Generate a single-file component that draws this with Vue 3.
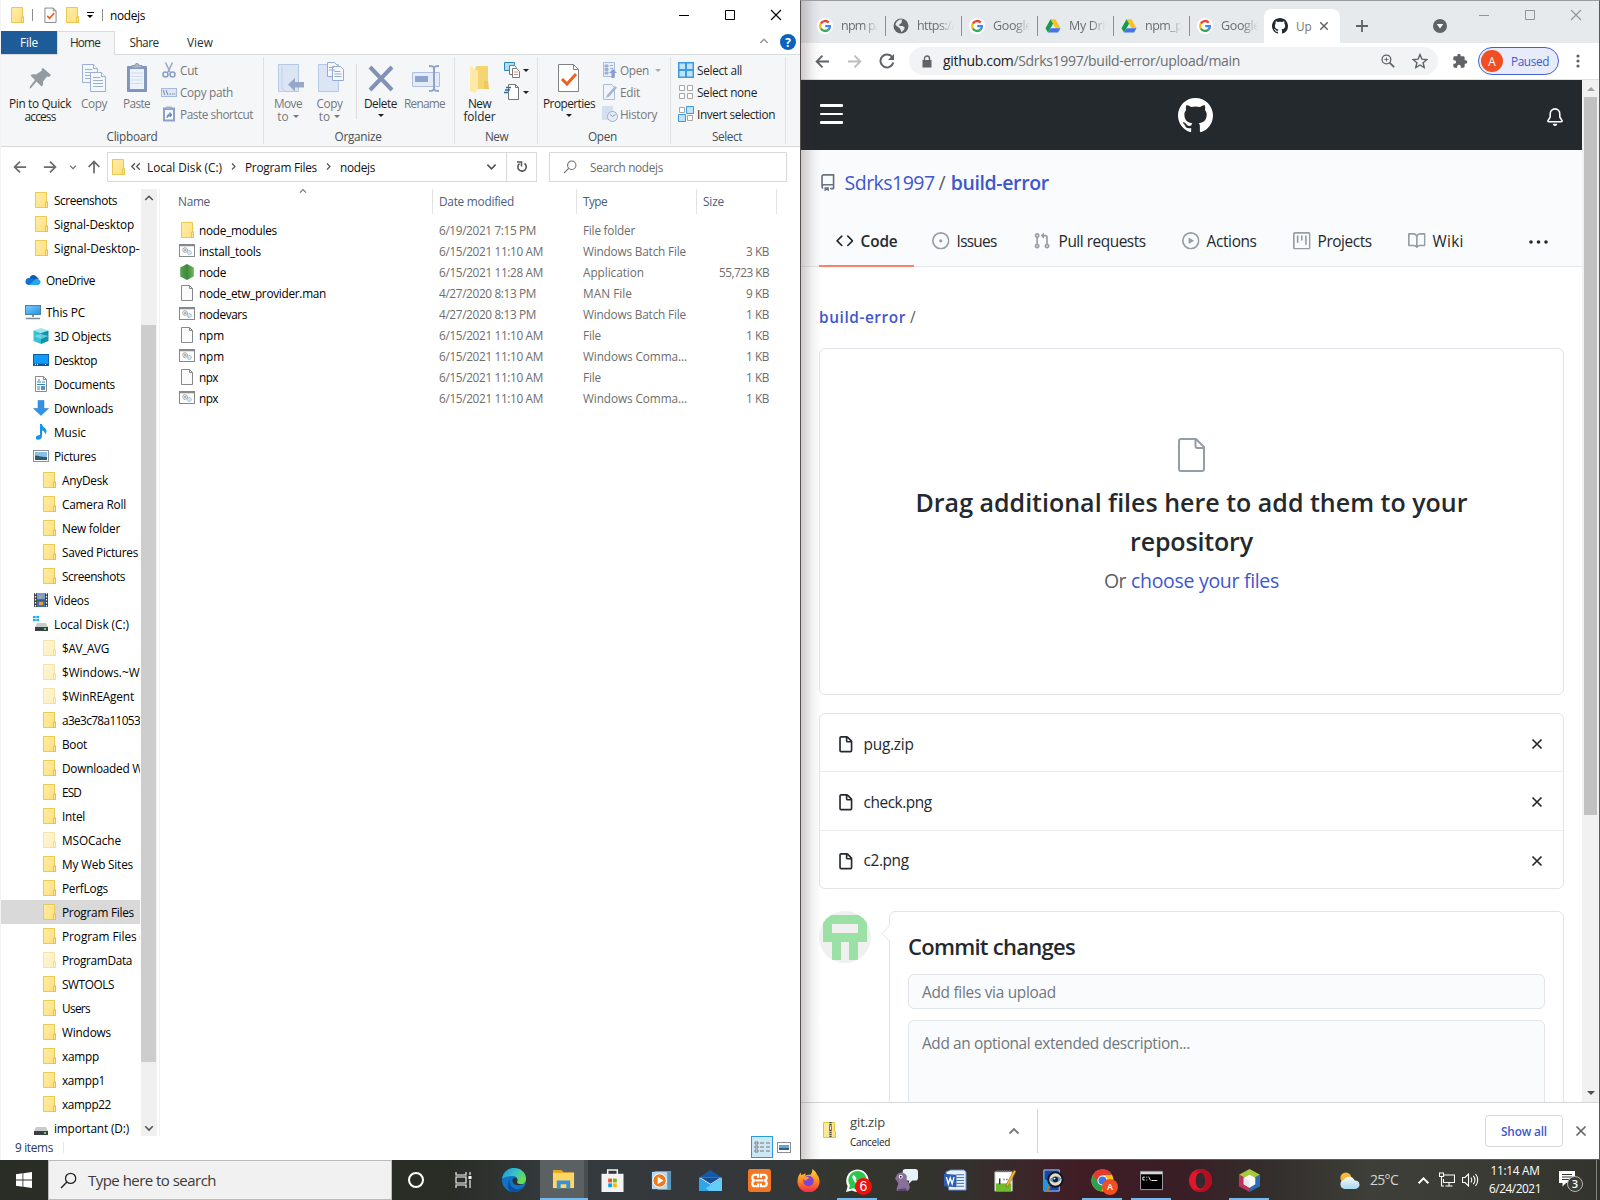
<script setup>
import { h } from 'vue'

// Draws one symbol of the sprite at the given width / height.
const Ic = (p) =>
  h('svg', { width: p.s, height: p.t || p.s, class: 'ic' }, [h('use', { href: '#' + p.n })])
Ic.props = ['n', 's', 't']

// Tracks a label so that it takes exactly the given width.
const vFit = {
  mounted(el, { value }) {
    if (!value) return
    const w = el.getBoundingClientRect().width
    const n = el.textContent.length
    el.style.letterSpacing = (value - w) / n + 'px'
  },
}

const tree = [
  ['Screenshots', 63, 1, 'folder'],
  ['Signal-Desktop', 80, 1, 'folder'],
  ['Signal-Desktop-c', 91, 1, 'folder'],
  ['OneDrive', 49, 0, 'onedrive', 'gap'],
  ['This PC', 39, 0, 'pc', 'gap'],
  ['3D Objects', 57, 1, 'cube'],
  ['Desktop', 43, 1, 'desktop'],
  ['Documents', 61, 1, 'document'],
  ['Downloads', 59, 1, 'download'],
  ['Music', 32, 1, 'music'],
  ['Pictures', 42, 1, 'picture'],
  ['AnyDesk', 46, 2, 'folder'],
  ['Camera Roll', 64, 2, 'folder'],
  ['New folder', 58, 2, 'folder'],
  ['Saved Pictures', 76, 2, 'folder'],
  ['Screenshots', 63, 2, 'folder'],
  ['Videos', 35, 1, 'video'],
  ['Local Disk (C:)', 75, 1, 'diskc'],
  ['$AV_AVG', 47, 2, 'folder', 'faint'],
  ['$Windows.~WS', 84, 2, 'folder', 'faint'],
  ['$WinREAgent', 72, 2, 'folder', 'faint'],
  ['a3e3c78a11053', 78, 2, 'folder'],
  ['Boot', 25, 2, 'folder'],
  ['Downloaded W', 81, 2, 'folder'],
  ['ESD', 19, 2, 'folder'],
  ['Intel', 23, 2, 'folder'],
  ['MSOCache', 59, 2, 'folder', 'faint'],
  ['My Web Sites', 71, 2, 'folder'],
  ['PerfLogs', 46, 2, 'folder'],
  ['Program Files', 72, 2, 'folder', 'selected'],
  ['Program Files (x86)', 104, 2, 'folder'],
  ['ProgramData', 70, 2, 'folder', 'faint'],
  ['SWTOOLS', 52, 2, 'folder'],
  ['Users', 28, 2, 'folder'],
  ['Windows', 49, 2, 'folder'],
  ['xampp', 37, 2, 'folder'],
  ['xampp1', 43, 2, 'folder'],
  ['xampp22', 49, 2, 'folder'],
  ['important (D:)', 75, 1, 'disk'],
]

const files = [
  ['folder', 'node_modules', 78, '6/19/2021 7:15 PM', 97, 'File folder', 52, '', 0],
  ['batch', 'install_tools', 62, '6/15/2021 11:10 AM', 104, 'Windows Batch File', 103, '3 KB', 23],
  ['node', 'node', 27, '6/15/2021 11:28 AM', 104, 'Application', 61, '55,723 KB', 50],
  ['blank', 'node_etw_provider.man', 127, '4/27/2020 8:13 PM', 97, 'MAN File', 49, '9 KB', 23],
  ['batch', 'nodevars', 48, '4/27/2020 8:13 PM', 97, 'Windows Batch File', 103, '1 KB', 23],
  ['blank', 'npm', 25, '6/15/2021 11:10 AM', 104, 'File', 18, '1 KB', 23],
  ['batch', 'npm', 25, '6/15/2021 11:10 AM', 104, 'Windows Comma...', 104, '1 KB', 23],
  ['blank', 'npx', 19, '6/15/2021 11:10 AM', 104, 'File', 18, '1 KB', 23],
  ['batch', 'npx', 19, '6/15/2021 11:10 AM', 104, 'Windows Comma...', 104, '1 KB', 23],
]

const tabs = [
  ['google', 'npm pa', 40],
  ['globe', 'https://', 38],
  ['google', 'Google', 39],
  ['drive', 'My Driv', 42],
  ['drive', 'npm_pr', 42],
  ['google', 'Google', 39],
]

const nav = [
  ['o-code', 'Code', 37, 'on', 95],
  ['o-issue', 'Issues', 40, '', 103],
  ['o-pr', 'Pull requests', 87, '', 148],
  ['o-play', 'Actions', 50, '', 110],
  ['o-project', 'Projects', 54, '', 116],
  ['o-book', 'Wiki', 31, '', 95],
]

const uploads = [['pug.zip', 50], ['check.png', 68], ['c2.png', 45]]

const apps = [
  ['explorer', 'active'],
  ['store', ''],
  ['player', ''],
  ['mail', ''],
  ['xampp', ''],
  ['firefox', ''],
  ['whatsapp', 'open'],
  ['pidgin', ''],
  ['word', ''],
  ['npp', ''],
  ['viewer', ''],
  ['chrome', 'open'],
  ['cmd', 'open multi'],
  ['opera', ''],
  ['netbeans', 'open'],
]
</script>

<template>
  <div class="screen">
    <svg class="sprite" width="0" height="0">
      <defs>
        <linearGradient id="gf" x1="0" y1="0" x2="1" y2="1"><stop offset="0" stop-color="#ffeca5" /><stop offset="1" stop-color="#ffe07f" /></linearGradient>
        <linearGradient id="gb" x1="0" y1="0" x2="1" y2="1"><stop offset="0" stop-color="#7fccff" /><stop offset="1" stop-color="#1d93e6" /></linearGradient>
        <linearGradient id="gn" x1="0" y1="0" x2="1" y2="0"><stop offset="0" stop-color="#56a64b" /><stop offset=".5" stop-color="#3f873f" /><stop offset="1" stop-color="#6cb85c" /></linearGradient>
        <linearGradient id="ge" x1="0" y1="0" x2="1" y2=".6"><stop offset="0" stop-color="#1b8fe0" /><stop offset=".5" stop-color="#35c1c9" /><stop offset="1" stop-color="#6fdc4b" /></linearGradient>
        <linearGradient id="gx" x1="0" y1="0" x2="0" y2="1"><stop offset="0" stop-color="#ffd83a" /><stop offset=".5" stop-color="#ff8a1f" /><stop offset="1" stop-color="#f5254f" /></linearGradient>
        <linearGradient id="gp" x1="0" y1="0" x2="0" y2="1"><stop offset="0" stop-color="#f7fafc" /><stop offset="1" stop-color="#a9d8ee" /></linearGradient>
      </defs>
      <symbol id="folder" viewBox="0 0 16 16"><path d="M2.500.5h11v9l1 0v6h-12z" fill="url(#gf)" stroke="#ebc850" /><path d="M12.500 15V10h2v5.500h-2z" fill="#ffe793" stroke="#e3bb42" stroke-width=".8" /></symbol>
      <symbol id="zip" viewBox="0 0 16 16"><path d="M1.500.5h11v9h1v6h-12z" fill="url(#gf)" stroke="#dfc43f" /><path d="M7 0h3v16H7z" fill="#b9bcc0" /><path d="M8.500 0v4M8.500 8v8" stroke="#444" stroke-width="2" stroke-dasharray="1 1" /><rect x="7.500" y="4" width="2" height="4" fill="#eee" stroke="#555" stroke-width=".7" /></symbol>
      <symbol id="onedrive" viewBox="0 0 16 16"><path d="M4.500 6a4 4 0 0 1 7.200-1.200L14 7 6 11z" fill="#0f5cb4" /><path d="M3.500 13A3.300 3.300 0 1 1 4.600 6L10 8l-1 5z" fill="#1073d0" /><path d="M4 13l6-5.600A3.600 3.600 0 0 1 14 7.600 2.900 2.900 0 0 1 13.300 13z" fill="#28a8ea" /></symbol>
      <symbol id="pc" viewBox="0 0 16 16"><rect x=".5" y="1.500" width="15" height="9" fill="url(#gb)" stroke="#4d7f9f" /><path d="M7 11h2v2H7z" fill="#8a949b" /><path d="M1 14.500h14" stroke="#7e8a92" stroke-width="1.500" /></symbol>
      <symbol id="cube" viewBox="0 0 16 16"><path d="M8 0l7.500 2.500L8 5 .5 2.500z" fill="#9fe6f0" /><path d="M.5 2.500L8 5v11L.5 13z" fill="#37c1d6" /><path d="M15.500 2.500L8 5v11l7.500-3z" fill="#1193ac" /><path d="M1 8l7-2 7.500 2L8 11z" fill="#83dfec" opacity=".7" /></symbol>
      <symbol id="desktop" viewBox="0 0 16 16"><rect x=".5" y="2.500" width="15" height="11" fill="#129bf5" stroke="#0a63b0" /><path d="M1 12.500h14" stroke="#084f92" stroke-width="1.500" /><path d="M2 12.500h3M12 12.500h2" stroke="#fff" stroke-dasharray="1 1" /></symbol>
      <symbol id="document" viewBox="0 0 16 16"><path d="M2.500.5h8l3 3v12h-11z" fill="#fff" stroke="#868a8e" /><path d="M10.500.5v3h3" fill="none" stroke="#868a8e" /><path d="M5 4h2M4 6h4M9 6h3M4 8.500h8M4 11h3M4 13h3" stroke="#2f86c9" /><path d="M8 10h4v4H8z" fill="#5c92b8" /></symbol>
      <symbol id="download" viewBox="0 0 16 16"><path d="M5 .5h6v8h4.500L8 15.500.5 8.500H5z" fill="#3392e3" stroke="#2179c4" stroke-width=".5" /></symbol>
      <symbol id="music" viewBox="0 0 16 16"><path d="M7 0h2c0 3 4.500 4 4.500 7 0 1.500-1 3-1.500 3.500.5-2-1-3.500-3-4V12c0 2-1.500 3.800-4 3.800C1.500 15.800 2 11 7 11z" fill="#1495ee" /></symbol>
      <symbol id="picture" viewBox="0 0 16 16"><rect x=".5" y="2.500" width="15" height="11" fill="#fff" stroke="#8b9196" /><path d="M2 4h12v8H2z" fill="#8bbfe8" /><path d="M2 7.500c4 0 6 2 12 1.500V12H2z" fill="#2f5a6a" /></symbol>
      <symbol id="video" viewBox="0 0 16 16"><path d="M1 1h14v14H1z" fill="#3a3d42" /><path d="M4 1h8v6.500H4z" fill="#6f9ed8" /><path d="M4 8.500h8V15H4z" fill="#3d6fc0" /><path d="M6 3l4 2-4 2zM6 10h4v3H6z" fill="#d7a43c" /><path d="M2.500 1v14M13.500 1v14" stroke="#fff" stroke-width="1.300" stroke-dasharray="1.500 1.500" /></symbol>
      <symbol id="disk" viewBox="0 0 16 16"><path d="M3 7h10l2 4H1z" fill="#c9ccce" /><path d="M1 11h14v4H1z" fill="#3c3f42" /><rect x="11" y="12" width="2" height="2" fill="#4ee04e" /></symbol>
      <symbol id="diskc" viewBox="0 0 16 16"><path d="M0 0h2.700v2.300H0zM3.300 0H6v2.300H3.300zM0 3h2.700v2.300H0zM3.300 3H6v2.300H3.300z" fill="#17b3f0" /><path d="M4 7h9l2 4H2z" fill="#c9ccce" /><path d="M2 11h13v4H2z" fill="#3c3f42" /><rect x="11" y="12" width="2" height="2" fill="#4ee04e" /></symbol>
      <symbol id="batch" viewBox="0 0 16 16"><rect x=".5" y="1.500" width="15" height="12" fill="#fff" stroke="#85898c" /><path d="M1 2.500h14" stroke="#85898c" stroke-width="1.500" /><circle cx="6" cy="7" r="2.400" fill="#e3e5e7" stroke="#85898c" stroke-dasharray="1 .6" /><circle cx="6" cy="7" r=".8" fill="#777" /><circle cx="10.300" cy="9.500" r="2" fill="#d3e8f7" stroke="#7ea5c2" stroke-dasharray="1 .6" /></symbol>
      <symbol id="blank" viewBox="0 0 16 16"><path d="M2.500.5h8l3 3v12h-11z" fill="#fbfbfb" stroke="#85898c" /><path d="M10.500.5v3h3" fill="none" stroke="#85898c" /></symbol>
      <symbol id="node" viewBox="0 0 16 16"><path d="M8 0l6.800 3.500v9L8 16l-6.800-3.500v-9z" fill="url(#gn)" /></symbol>
      <symbol id="check" viewBox="0 0 14 17"><path d="M1 .5h9l3 3V16H1z" fill="#fff" stroke="#7d8185" /><path d="M10 .5v3h3" fill="none" stroke="#7d8185" /><path d="M3.500 9l2.500 2.500 5-5.500" fill="none" stroke="#ee5e1d" stroke-width="1.800" /></symbol>
      <symbol id="pin" viewBox="0 0 32 32"><path d="M18 6l8 7-2 2-2-.5-4 5c.5 2.500 0 4-1.500 5l-5-5L6 26l-1.500.500.5-2 5-6.500-4.500-4.500c1.500-1.500 3.500-1.500 5.500-1l6-4-.5-1.500z" fill="#929ba1" transform="translate(1 0)" /></symbol>
      <symbol id="copy" viewBox="0 0 32 32"><g fill="#f4f7fc" stroke="#9db0d2"><path d="M4.500 2.500h11l4 4v14h-15z" /><path d="M15.500 2.500v4h4M7 7.500h7M7 10.500h10M7 13.500h10M7 16.500h10" /><path d="M12.500 10.500h11l4 4v15h-15z" /><path d="M23.500 10.500v4h4M15 15.500h7M15 18.500h10M15 21.500h10M15 24.500h10" /></g></symbol>
      <symbol id="paste" viewBox="0 0 32 32"><path d="M6.500 4.500h19v25h-19z" fill="#8297bf" stroke="#8092b5" /><path d="M9 7h14v20H9z" fill="#eef2fa" /><path d="M11 6V3.500h3a2 2 0 0 1 4 0h3V6z" fill="#a9b6cc" stroke="#8898b8" /><path d="M10 11h12M10 14.500h12M10 18h12M10 21.500h12" stroke="#d0dbee" /></symbol>
      <symbol id="cut" viewBox="0 0 16 16"><path d="M4.500.5L9 10M11.500.5L7 10" stroke="#9aabc6" stroke-width="1.600" /><circle cx="4.500" cy="12.500" r="2.500" fill="none" stroke="#8ba0c6" stroke-width="1.600" /><circle cx="11.500" cy="12.500" r="2.500" fill="none" stroke="#8ba0c6" stroke-width="1.600" /></symbol>
      <symbol id="path" viewBox="0 0 16 16"><rect x=".5" y="4.500" width="15" height="8" fill="#dfe7f4" stroke="#a7b9d8" /><path d="M2 6l2 5M5 6l2 5M8.500 10h1.500M11 10h1.500M13.300 10h1" stroke="#6d84ae" /></symbol>
      <symbol id="shortcut" viewBox="0 0 16 16"><rect x="2" y="1.500" width="12" height="14" fill="#8da1c7" /><rect x="4" y="4" width="8" height="9.500" fill="#f4f7fc" /><path d="M5 .5h6V3H5z" fill="#a0aec8" /><path d="M6 12c0-3 1-4 3-4V6.500L11 9 9 11V9.500" fill="#7189b8" stroke="#7189b8" stroke-width=".8" /></symbol>
      <symbol id="moveto" viewBox="0 0 32 32"><path d="M6.500 2.500h20v27h-20z" fill="#dbe5f4" stroke="#b7c8e3" /><path d="M7 29.500h7l-4-3V5" fill="none" stroke="#c1d0e8" /><path d="M16 22.500l7-6.500v4h9v5.500h-9v4z" fill="#98a7c6" /></symbol>
      <symbol id="copyto" viewBox="0 0 32 32"><path d="M4.500 2.500h20v27h-20z" fill="#dbe5f4" stroke="#b7c8e3" /><g fill="#f6f8fc" stroke="#98abcf"><path d="M13.500.5h7l3 3v11h-10z" /><path d="M15 5.500h5M15 8h6M18.500 4.500h8l3 3v11h-11z" /><path d="M20.500 9.500h6M20.500 12h7M20.500 14.500h7" /></g></symbol>
      <symbol id="delete" viewBox="0 0 32 32"><path d="M5 5l22 23M27 5L5 28" stroke="#8292b6" stroke-width="4" /></symbol>
      <symbol id="rename" viewBox="0 0 32 32"><path d="M3.500 10.500h27v14h-27z" fill="#e4ecf7" stroke="#afc1df" /><path d="M6 14h13v6H6z" fill="#8fa4cb" /><path d="M20 4c3 0 5 0 5 3v19c0 3 2 3 5 3M30 4c-3 0-5 0-5 3v19c0 3-2 3-5 3" fill="none" stroke="#8ea3ca" stroke-width="2" /></symbol>
      <symbol id="newfolder" viewBox="0 0 32 32"><path d="M12 4h12v23H6z" fill="#f5d472" /><path d="M6 4l8 5v16l-3 6-5-2z" fill="#ffe9a6" /><path d="M20 27V19h4l1 8z" fill="#f0c95b" /></symbol>
      <symbol id="newitem" viewBox="0 0 16 16"><path d="M.5.500h10v8H.5z" fill="#b6dcf3" stroke="#2d89bd" /><path d="M5.500 3.500h5l2 2v7h-7z" fill="#fff" stroke="#777" /><path d="M8.500 6.500h4l3 3v6h-7z" fill="#fff" stroke="#777" /><path d="M10 10h4M10 12.500h4" stroke="#d88" /></symbol>
      <symbol id="easy" viewBox="0 0 16 16"><path d="M4.500.500h7l3 3v12h-10z" fill="#fff" stroke="#777" /><path d="M11.500.500v3h3" fill="none" stroke="#777" /><path d="M2 3.500h5M1 6h5M0 8.500h4" stroke="#2a6ea8" stroke-width="1.300" /></symbol>
      <symbol id="props" viewBox="0 0 32 32"><path d="M5.500 2.500h15l5 5v22h-20z" fill="#fff" stroke="#7f8386" /><path d="M20.500 2.500v5h5" fill="none" stroke="#7f8386" /><path d="M9 17l5 5 9-10" fill="none" stroke="#ef6020" stroke-width="3" /></symbol>
      <symbol id="open" viewBox="0 0 16 16"><path d="M1.500.500h11v14h-11z" fill="#e7eef8" stroke="#a9bbdb" /><path d="M3 3h3v2H3zM3 6.500h3v2H3zM3 10h3v2H3zM8 3.500h3M8 6.500h3" stroke="#9db0d3" fill="#9db0d3" /><path d="M11 7l4 4h-2.500v5h-3v-5H7z" fill="#8a9fc6" /></symbol>
      <symbol id="edit" viewBox="0 0 16 16"><path d="M1.500.500h8l3 3v12h-11z" fill="#f1f5fb" stroke="#a9bbdb" /><path d="M4 14l1-3 8-9 2 1.700-8 9z" fill="#a5b6d6" /></symbol>
      <symbol id="history" viewBox="0 0 16 16"><path d="M0 0h11v14H0z" fill="#d4dff0" /><circle cx="10.500" cy="10.500" r="5" fill="#e8eef7" stroke="#9badce" /><path d="M10.500 10.500l3-2M10.500 10.500L8 8.500" stroke="#8398c0" /></symbol>
      <symbol id="selall" viewBox="0 0 16 16"><path d="M0 0h16v16H0z" fill="#3d9ade" /><path d="M1.500 1.500H7V7H1.500zM9 1.500h5.500V7H9zM1.500 9H7v5.500H1.500zM9 9h5.500v5.500H9z" fill="#bfe3fb" /></symbol>
      <symbol id="selnone" viewBox="0 0 16 16"><path d="M1.500 1.500h5v5h-5zM9.500 1.500h5v5h-5zM1.500 9.500h5v5h-5zM9.500 9.500h5v5h-5z" fill="#fff" stroke="#a6a6a6" /></symbol>
      <symbol id="selinv" viewBox="0 0 16 16"><path d="M1.500 1.500h5v5h-5zM9.500 9.500h5v5h-5z" fill="#fff" stroke="#a6a6a6" /><path d="M8.500.500h7v7h-7zM.5 8.500h7v7h-7z" fill="#bfe3fb" stroke="#3d9ade" /></symbol>
      <symbol id="google" viewBox="0 0 16 16"><circle cx="8" cy="8" r="8" fill="#fff" /><g fill="none" stroke-width="2.300"><path d="M11.700 4.600A4.900 4.900 0 0 0 3.800 5.600" stroke="#ea4335" /><path d="M3.800 5.600a4.900 4.900 0 0 0 0 4.900" stroke="#fbbc05" /><path d="M3.800 10.500a4.900 4.900 0 0 0 7.600 1.200" stroke="#34a853" /><path d="M11.400 11.700A4.900 4.900 0 0 0 12.900 8.200H8.200" stroke="#4285f4" /></g></symbol>
      <symbol id="globe" viewBox="0 0 16 16"><circle cx="8" cy="8" r="7.500" fill="#5f6368" /><path d="M9.500 1.500c-2 2 .5 2-1.500 4-2 .5-2.500 2-1 2.500h2.500c1 1 2.500 1 2 2.500-.5 1.500-2 3-3.500 3.500.5-2-1-2.500-1.500-4L2.500 7c0-2.500 2-4.500 4.500-5.500z" fill="#e7eaed" /></symbol>
      <symbol id="drive" viewBox="0 0 16 16"><path d="M5.500 1.300h5l5 9h-5z" fill="#fcc31e" /><path d="M5.500 1.300l2.600 4.400L3 14.600.5 10.300z" fill="#169c4d" /><path d="M3 14.600l2.600-4.300h9.900L13 14.600z" fill="#4474e8" /></symbol>
      <symbol id="puzzle" viewBox="0 0 24 24"><path fill="#5f6368" d="M20.500 11H19V7a2 2 0 0 0-2-2h-4V3.500a2.500 2.500 0 0 0-5 0V5H4a2 2 0 0 0-2 2v3.800h1.500a2.700 2.700 0 0 1 0 5.400H2V20a2 2 0 0 0 2 2h3.800v-1.500a2.700 2.700 0 0 1 5.400 0V22H17a2 2 0 0 0 2-2v-4h1.500a2.500 2.500 0 0 0 0-5z" /></symbol>
      <symbol id="mark" viewBox="0 0 16 16"><path fill="currentColor" d="M8 0C3.580 0 0 3.580 0 8c0 3.540 2.290 6.530 5.470 7.590.4.070.55-.17.55-.38 0-.19-.01-.82-.01-1.490-2.010.37-2.530-.49-2.690-.94-.09-.23-.48-.94-.82-1.130-.28-.15-.68-.52-.01-.53.63-.01 1.080.58 1.230.82.72 1.210 1.870.87 2.330.66.070-.52.28-.87.51-1.070-1.780-.2-3.640-.89-3.640-3.950 0-.87.31-1.590.82-2.150-.08-.2-.36-1.020.08-2.120 0 0 .67-.21 2.200.82.64-.18 1.320-.27 2-.27.68 0 1.360.09 2 .27 1.530-1.040 2.200-.82 2.200-.82.44 1.100.16 1.920.08 2.120.51.56.82 1.270.82 2.150 0 3.070-1.870 3.750-3.650 3.950.29.25.54.73.54 1.480 0 1.070-.01 1.930-.01 2.200 0 .21.15.46.55.38A8.013 8.013 0 0016 8c0-4.420-3.580-8-8-8z" /></symbol>
      <symbol id="o-repo" viewBox="0 0 16 16"><path fill="currentColor" fill-rule="evenodd" d="M2 2.500A2.500 2.500 0 014.500 0h8.750a.75.75 0 01.75.75v12.500a.75.75 0 01-.75.75h-2.500a.75.75 0 110-1.500h1.750v-2h-8a1 1 0 00-.714 1.700.75.75 0 01-1.072 1.050A2.495 2.495 0 012 11.500v-9zm10.500-1V9h-8c-.356 0-.694.074-1 .208V2.500a1 1 0 011-1h8zM5 12.250v3.250a.25.25 0 00.4.2l1.450-1.087a.25.25 0 01.3 0L8.600 15.700a.25.25 0 00.4-.2v-3.250a.25.25 0 00-.25-.25h-3.500a.25.25 0 00-.25.25z" /></symbol>
      <symbol id="o-issue" viewBox="0 0 16 16"><path fill="currentColor" fill-rule="evenodd" d="M8 9.500a1.500 1.500 0 100-3 1.500 1.500 0 000 3zM8 0a8 8 0 100 16A8 8 0 008 0zM1.500 8a6.500 6.500 0 1113 0 6.500 6.500 0 01-13 0z" /></symbol>
      <symbol id="o-pr" viewBox="0 0 16 16"><path fill="currentColor" fill-rule="evenodd" d="M7.177 3.073L9.573.677A.25.25 0 0110 .854v4.792a.25.25 0 01-.427.177L7.177 3.427a.25.25 0 010-.354zM3.750 2.500a.75.75 0 100 1.500.75.75 0 000-1.500zm-2.250.75a2.250 2.250 0 113 2.122v5.256a2.251 2.251 0 11-1.500 0V5.372A2.250 2.250 0 011.500 3.250zM11 2.500h-1V4h1a1 1 0 011 1v5.628a2.251 2.251 0 101.500 0V5A2.500 2.500 0 0011 2.500zm1 10.250a.75.75 0 111.500 0 .75.75 0 01-1.500 0zM3.750 12a.75.75 0 100 1.500.75.75 0 000-1.500z" /></symbol>
      <symbol id="o-play" viewBox="0 0 16 16"><path fill="currentColor" fill-rule="evenodd" d="M1.500 8a6.500 6.500 0 1113 0 6.500 6.500 0 01-13 0zM8 0a8 8 0 100 16A8 8 0 008 0zM6.379 5.227A.25.25 0 006 5.442v5.117a.25.25 0 00.379.214l4.264-2.559a.25.25 0 000-.428L6.379 5.227z" /></symbol>
      <symbol id="o-project" viewBox="0 0 16 16"><path fill="currentColor" fill-rule="evenodd" d="M1.750 0A1.750 1.750 0 000 1.750v12.500C0 15.216.784 16 1.750 16h12.500A1.750 1.750 0 0016 14.250V1.750A1.750 1.750 0 0014.250 0H1.750zM1.500 1.750a.25.25 0 01.25-.25h12.500a.25.25 0 01.25.25v12.500a.25.25 0 01-.25.25H1.750a.25.25 0 01-.25-.25V1.750zM11.750 3a.75.75 0 00-.75.75v7.500a.75.75 0 001.500 0v-7.500a.75.75 0 00-.75-.75zm-8.250.75a.75.75 0 011.500 0v5.500a.75.75 0 01-1.500 0v-5.500zM8 3a.75.75 0 00-.75.75v3.500a.75.75 0 001.500 0v-3.500A.75.75 0 008 3z" /></symbol>
      <symbol id="o-book" viewBox="0 0 16 16"><path fill="currentColor" fill-rule="evenodd" d="M0 1.750A.75.75 0 01.75 1h4.253c1.227 0 2.317.59 3 1.501A3.744 3.744 0 0111.006 1h4.245a.75.75 0 01.75.75v10.500a.75.75 0 01-.75.75h-4.507a2.250 2.250 0 00-1.591.659l-.622.621a.75.75 0 01-1.060 0l-.622-.621A2.250 2.250 0 005.258 13H.75a.75.75 0 01-.75-.75V1.750zm8.755 3a2.250 2.250 0 012.250-2.250H14.500v9h-3.757c-.71 0-1.400.201-1.992.572l.004-7.322zm-1.504 7.324l.004-5.073-.002-2.253A2.250 2.250 0 005.003 2.500H1.500v9h3.757a3.750 3.750 0 011.994.574z" /></symbol>
      <symbol id="o-code" viewBox="0 0 16 16"><path fill="currentColor" fill-rule="evenodd" d="M4.720 3.220a.75.75 0 011.060 1.060L2.060 8l3.720 3.720a.75.75 0 11-1.060 1.060L.47 8.530a.75.75 0 010-1.060l4.250-4.250zm6.560 0a.75.75 0 10-1.060 1.060L13.940 8l-3.720 3.720a.75.75 0 101.060 1.060l4.250-4.250a.75.75 0 000-1.060l-4.250-4.250z" /></symbol>
      <symbol id="o-file" viewBox="0 0 16 16"><path fill="currentColor" fill-rule="evenodd" d="M3.750 1.500a.25.25 0 00-.25.25v11.500c0 .138.112.25.25.25h8.500a.25.25 0 00.25-.25V6H9.750A1.750 1.750 0 018 4.250V1.500H3.750zm5.750.56v2.190c0 .138.112.25.25.25h2.190L9.500 2.060zM2 1.750C2 .784 2.784 0 3.750 0h5.086c.464 0 .909.184 1.237.513l3.414 3.414c.329.328.513.773.513 1.237v8.086A1.750 1.750 0 0112.250 15h-8.500A1.750 1.750 0 012 13.250V1.750z" /></symbol>
      <symbol id="o-file24" viewBox="0 0 27 34"><path d="M3 1h15l8 8v22a2 2 0 0 1-2 2H3a2 2 0 0 1-2-2V3a2 2 0 0 1 2-2zM17.500 1v7a2 2 0 0 0 2 2H26" fill="none" stroke="currentColor" stroke-width="2" /></symbol>
      <symbol id="o-bell" viewBox="0 0 16 16"><path fill="currentColor" d="M8 16a2 2 0 001.985-1.750c.017-.137-.097-.25-.235-.25h-3.500c-.138 0-.252.113-.235.25A2 2 0 008 16z" /><path d="M8 .75A4.250 4.250 0 0 0 3.750 5v3l-2 3.200c-.3.500 0 1.050.75 1.050h11c.75 0 1.050-.55.75-1.050L12.250 8V5A4.250 4.250 0 0 0 8 .75z" fill="none" stroke="currentColor" stroke-width="1.400" /></symbol>
      <symbol id="x" viewBox="0 0 12 12"><path d="M1.500 1.500l9 9M10.500 1.500l-9 9" stroke="currentColor" stroke-width="1.700" /></symbol>
      <symbol id="thinx" viewBox="0 0 12 12"><path d="M1 1l10 10M11 1L1 11" stroke="currentColor" stroke-width="1.100" /></symbol>
      <symbol id="max" viewBox="0 0 12 12"><path d="M1.500 1.500h9v9h-9z" fill="none" stroke="currentColor" /></symbol>
      <symbol id="min" viewBox="0 0 12 12"><path d="M1 6.500h10" stroke="currentColor" /></symbol>
      <symbol id="up" viewBox="0 0 12 12"><path d="M1.500 8.500L6 4l4.500 4.500" fill="none" stroke="currentColor" stroke-width="1.800" /></symbol>
      <symbol id="down" viewBox="0 0 12 12"><path d="M1.500 4L6 8.500 10.500 4" fill="none" stroke="currentColor" stroke-width="1.800" /></symbol>
      <symbol id="right" viewBox="0 0 12 12"><path d="M4 2l4 4-4 4" fill="none" stroke="currentColor" stroke-width="1.600" /></symbol>
      <symbol id="left2" viewBox="0 0 12 12"><path d="M5.500 3l-3 3 3 3M10 3L7 6l3 3" fill="none" stroke="currentColor" stroke-width="1.200" /></symbol>
      <symbol id="arrow" viewBox="0 0 16 16"><path d="M15 8H2M8 1.800L1.800 8 8 14.200" fill="none" stroke="currentColor" stroke-width="2" /></symbol>
      <symbol id="reload" viewBox="0 0 16 16"><path d="M13.500 4.500A6.500 6.500 0 1 0 14.300 9.500" fill="none" stroke="currentColor" stroke-width="2" /><path d="M15 1v6H9z" fill="currentColor" /></symbol>
      <symbol id="refresh" viewBox="0 0 12 12"><path d="M8.500 2.500A4.200 4.200 0 1 1 3.500 2.600" fill="none" stroke="currentColor" stroke-width="1.600" /><path d="M1 1h4.500v4.500" fill="none" stroke="currentColor" stroke-width="1.500" /></symbol>
      <symbol id="mag" viewBox="0 0 16 16"><circle cx="10" cy="6" r="4.800" fill="none" stroke="currentColor" stroke-width="1.200" /><path d="M6.500 9.500L1 15" stroke="currentColor" stroke-width="1.300" /></symbol>
      <symbol id="zoomin" viewBox="0 0 16 16"><circle cx="6.200" cy="6.200" r="5" fill="none" stroke="currentColor" stroke-width="1.500" /><path d="M9.800 9.800L15 15" stroke="currentColor" stroke-width="2" /><path d="M3.700 6.200h5M6.200 3.700v5" stroke="currentColor" /></symbol>
      <symbol id="star" viewBox="0 0 16 16"><path d="M8 1.600l1.900 4.500 4.900.400-3.700 3.200 1.100 4.800L8 12l-4.200 2.500 1.100-4.800L1.200 6.500l4.900-.4z" fill="none" stroke="currentColor" stroke-width="1.400" /></symbol>
      <symbol id="lock" viewBox="0 0 10 13"><path d="M.5 5h9v7.500h-9z" fill="currentColor" /><path d="M2.500 5V3.500a2.500 2.500 0 0 1 5 0V5" fill="none" stroke="currentColor" stroke-width="1.400" /></symbol>

      <symbol id="win" viewBox="0 0 16 16"><path d="M0 2.200L6.500 1.300v6.300H0zM7.300 1.200L16 0v7.600H7.300zM0 8.400h6.500v6.300L0 13.800zM7.300 8.400H16V16l-8.700-1.200z" fill="#fff" /></symbol>
      <symbol id="taskview" viewBox="0 0 18 16"><path d="M1 0v3h10V0M1 16v-3h10v3M1 5h10v6H1z" fill="none" stroke="#fff" stroke-width="1.100" /><path d="M15 0v3M15 8v8" stroke="#fff" stroke-width="1.100" /><path d="M13.500 4h3v3h-3z" fill="#fff" /></symbol>
      <symbol id="edge" viewBox="0 0 24 24"><circle cx="12" cy="12" r="12" fill="#1273c4" /><path d="M.3 10.500C1 4 6 0 12 0c7 0 12 5 12 10.500 0 4-3 6-6 6-2.500 0-4-1-3-2.500 1.500-3-.5-6-4-6C6.500 8 3 9 .3 10.500z" fill="url(#ge)" /><path d="M9 10.500c-3 3-1 9.500 5 10.500 3 .5 5.500-.5 7.500-2C18.500 23 14 24.500 9.500 23.700 5 22 4.500 14 9 10.500z" fill="#0c4fa0" /><path d="M11.500 10c-2 2-1.500 6 3 7 2 .4 5 0 7-1-3 .3-6.500 0-6.500-2 1-1.500.5-3.500-.8-4.500z" fill="#2b333a" /></symbol>
      <symbol id="explorer" viewBox="0 0 24 24"><path d="M1 2h9l2 2.500h11V8H1z" fill="#e8a416" /><path d="M1 5h22v16H1z" fill="#ffd665" /><path d="M5 13h14v8.500h-4V17H9v4.500H5z" fill="#3391dd" /></symbol>
      <symbol id="store" viewBox="0 0 24 24"><path d="M7 6V1h10v5" fill="none" stroke="#f3f3f3" stroke-width="1.600" /><path d="M.5 5h23v19H.5z" fill="#f3f3f3" /><path d="M7.500 10h4v4h-4z" fill="#f25022" /><path d="M12.500 10h4v4h-4z" fill="#7fba00" /><path d="M7.500 15h4v4h-4z" fill="#00a4ef" /><path d="M12.500 15h4v4h-4z" fill="#ffb900" /></symbol>
      <symbol id="player" viewBox="0 0 24 24"><path d="M5 2h17v20H8z" fill="#5f97b8" /><path d="M2 3h16v18H2z" fill="#b5d9ee" /><circle cx="10" cy="12" r="7" fill="#ef7a1a" stroke="#fff" /><path d="M8 8l6 4-6 4z" fill="#fff" /></symbol>
      <symbol id="mail" viewBox="0 0 24 24"><path d="M0 9l12-8 12 8v5H0z" fill="#1259a8" /><path d="M0 9h24l-12 8z" fill="#d9e9f5" /><path d="M0 9l12 7.500L24 9v14H0z" fill="#2ea6e8" /><path d="M24 9L7 20l4 3h13z" fill="#63cdf5" /><path d="M2 9h20l-10 6.500z" fill="#134f94" /></symbol>
      <symbol id="xampp" viewBox="0 0 24 24"><rect width="24" height="24" rx="2.500" fill="#f37623" /><path d="M10.500 9V6H7.500a3 3 0 0 0 0 6 3 3 0 0 0 0 6h3v-3M13.500 9V6h3a3 3 0 0 1 0 6 3 3 0 0 1 0 6h-3v-3M8 12h8" fill="none" stroke="#fff" stroke-width="2.300" /></symbol>
      <symbol id="firefox" viewBox="0 0 24 24"><path d="M16 0c3 2 4 4 5 6 1.500 1.500 2.500 4 2.500 7A11.500 11.500 0 0 1 .5 13C.5 9 2 6 4 4l.5 2.500L9 4.500 8.500 7C10 6 13 6 14 6c2-2 2-4 2-6z" fill="url(#gx)" /><circle cx="12" cy="12.500" r="5.500" fill="#7d45d6" /><path d="M7 9c2-1.500 5-1 6 1-2 .2-3 1-3.500 2C8 12 7 11 7 9z" fill="#ff9a26" /></symbol>
      <symbol id="whatsapp" viewBox="0 0 24 24"><path d="M0 24l1.700-6A11.700 11.700 0 1 1 6.200 22.500z" fill="#fff" /><path d="M3 21l1.100-4a9.500 9.500 0 1 1 3.500 3.100z" fill="#2cc64f" /><path d="M8 6c-2.500 1.500-1 5.500 2 8.500s7 4 8.500 1.500l-3-2-1.500 1c-2-.8-3.500-2.500-4-4l1-1z" fill="#fff" /></symbol>
      <symbol id="pidgin" viewBox="0 0 24 24"><rect x="8" y="0" width="16" height="12" rx="3" fill="#e5f1fb" /><path d="M15 11l-1 5 5-5z" fill="#e5f1fb" /><path d="M1 8c1-3 4-5 7-4 4 1 5 4 4 7l3 6c1 3 0 5-2 6H2c-1-4 2-6 1-9l-3-4z" fill="#8a6f9b" /><circle cx="6" cy="8" r="2" fill="#fff" /><circle cx="6" cy="8" r="1" fill="#222" /><path d="M3 21l8-1 2 3H3z" fill="#5a4569" /></symbol>
      <symbol id="word" viewBox="0 0 24 24"><path d="M2 3l5-2h14l2 2v19H5z" fill="#eaf1fb" stroke="#5f86c9" /><path d="M13 6h8M13 9h8M13 12h8M13 15h8M13 18h8" stroke="#3768b6" /><path d="M0 5l13 1v13L0 18z" fill="#2b5fb4" /><path d="M2.500 8.500l2 7 2-6 2 6 2-7" fill="none" stroke="#fff" stroke-width="1.500" /></symbol>
      <symbol id="npp" viewBox="0 0 24 24"><path d="M2 3h18v20H2z" fill="#fff" stroke="#bbb" /><path d="M3 15h16v8H3z" fill="#6dbb2c" /><path d="M4 2h14" stroke="#666" stroke-width="2" stroke-dasharray="1.500 1" /><path d="M7 10v6M11 11h1M14 11h1" stroke="#333" stroke-width="1.500" /><path d="M22 1l2 1.500-8 15-2.500 1.500.5-3z" fill="#f2b92b" stroke="#8a5b13" stroke-width=".6" /></symbol>
      <symbol id="viewer" viewBox="0 0 24 24"><path d="M2 1h16v22H2z" fill="#1846a8" stroke="#b9d6f5" /><path d="M1 9l8 5-4 9H1z" fill="#1f9bdc" /><circle cx="14" cy="11" r="7.500" fill="#eadbc8" stroke="#0b1523" stroke-width="2" /><path d="M8 11c3-4 8-5 12-1-2 5-9 6-12 1z" fill="#6d93b5" /><circle cx="14" cy="11" r="2.800" fill="#132233" /><circle cx="13" cy="10" r="1" fill="#fff" /><path d="M8 18l-3 5" stroke="#b9772f" stroke-width="2.500" /></symbol>
      <symbol id="chrome" viewBox="0 0 24 24"><circle cx="12" cy="12" r="11.500" fill="#fbc116" /><path d="M2 6.200A11.500 11.500 0 0 1 22 6.200H12z" fill="#e33b2e" /><path d="M2 6.200A11.500 11.500 0 0 0 10.500 23.400l5-9-6 1z" fill="#2ba24c" /><path d="M2 6.200h11L8 15z" fill="#e33b2e" /><circle cx="12" cy="12" r="5.300" fill="#fff" /><circle cx="12" cy="12" r="4.200" fill="#3b78e7" /></symbol>
      <symbol id="cmd" viewBox="0 0 24 24"><path d="M.5 2.500h23v19H.5z" fill="#000" stroke="#9fa3a6" /><path d="M1 3h22v2.500H1z" fill="#d5d8da" /><path d="M5 8.500H3v3h2M7 8v1M7 11v1M9 8l2 4M12 12h6" fill="none" stroke="#eee" /></symbol>
      <symbol id="opera" viewBox="0 0 24 24"><circle cx="12" cy="12" r="12" fill="#e0162b" /><path d="M12 0a12 12 0 0 1 0 24c-3 0-5-2-6-4 8 5 11-1 11-8S14 0 7 3.500C8.500 1 10 0 12 0z" fill="#a50e1f" opacity=".8" /><ellipse cx="12" cy="12" rx="5" ry="8.500" fill="#342a2e" /></symbol>
      <symbol id="netbeans" viewBox="0 0 24 24"><path d="M12 0l11 6-11 6L1 6z" fill="#a9c83d" /><path d="M1 6l11 6v12L1 18z" fill="#c0325b" /><path d="M23 6l-11 6v12l11-6z" fill="#2e6db5" /><path d="M12 6l6 3v7l-6 3.500L6 16V9z" fill="#fff" /><path d="M6 9l6 3.200v7.300L6 16z" fill="#e4e9ee" /></symbol>
      <symbol id="weather" viewBox="0 0 20 16"><circle cx="6.500" cy="5.500" r="5.200" fill="#f9b936" /><path d="M5 16a4.500 4.500 0 0 1-.5-8.700A6 6 0 0 1 15 8a4 4 0 0 1 1 8z" fill="url(#gp)" /></symbol>
      <symbol id="net" viewBox="0 0 16 16"><path d="M5 3h10.500v7.500H4.500V7M10 10.500V14M6.500 14h7M.5 1h4v3.500h-4zM2.500 4.500V14H5" fill="none" stroke="#fff" stroke-width="1.100" /></symbol>
      <symbol id="sound" viewBox="0 0 17 16"><path d="M.5 5.500h2.500L6.500 2v12L3 10.500H.5z" fill="none" stroke="#fff" stroke-width="1.100" /><path d="M9 5.500c1 1.500 1 3.500 0 5M11.300 3.800c2 2.500 2 6 0 8.400M13.500 2c3 3.500 3 8.500 0 12" fill="none" stroke="#fff" stroke-width="1.100" /></symbol>
      <symbol id="note" viewBox="0 0 16 16"><path d="M0 0h16v12h-9l-3.500 3.500V12H0z" fill="#fff" /><path d="M3 3.500h10M3 6h10M3 8.500h7" stroke="#33352f" /></symbol>
    </svg>

    <div class="windows">
      <section class="explorer">
        <header class="titlebar">
          <Ic n="folder" s="16" /><i class="bar"></i>
          <Ic n="check" s="13" t="17" class="q1" /><Ic n="folder" s="16" class="q2" />
          <span class="qat"></span><i class="bar b2"></i>
          <span v-fit="35" class="wt">nodejs</span>
          <span class="wctl"><Ic n="min" s="12" /><Ic n="max" s="12" /><Ic n="thinx" s="12" /></span>
        </header>
        <div class="tabs">
          <span class="file"><span v-fit="18">File</span></span>
          <span class="home"><span v-fit="30">Home</span></span>
          <span class="plain"><span v-fit="29">Share</span></span>
          <span class="plain vw"><span v-fit="26">View</span></span>
          <Ic n="up" s="10" class="coll" /><span class="help">?</span>
        </div>
        <div class="ribbon">
          <div class="group g1">
            <div class="tools">
              <div class="big dark w78"><Ic n="pin" s="32" /><span v-fit="62">Pin to Quick</span><span v-fit="31">access</span></div>
              <div class="big w32"><Ic n="copy" s="32" /><span v-fit="26">Copy</span></div>
              <div class="big w50"><Ic n="paste" s="32" /><span v-fit="27">Paste</span></div>
              <div class="smalls">
                <div><Ic n="cut" s="16" /><span v-fit="18">Cut</span></div>
                <div><Ic n="path" s="16" /><span v-fit="53">Copy path</span></div>
                <div><Ic n="shortcut" s="16" /><span v-fit="73">Paste shortcut</span></div>
              </div>
            </div>
            <div class="glabel"><span v-fit="51">Clipboard</span></div>
          </div>
          <div class="group g2">
            <div class="tools">
              <div class="big w40"><Ic n="moveto" s="32" /><span v-fit="28">Move</span><span class="arr">to<i class="tri"></i></span></div>
              <div class="big w42"><Ic n="copyto" s="32" /><span v-fit="26">Copy</span><span class="arr">to<i class="tri"></i></span></div>
              <i class="inner"></i>
              <div class="big dark w44"><Ic n="delete" s="32" /><span v-fit="33">Delete</span><i class="tri solo"></i></div>
              <div class="big w44"><Ic n="rename" s="32" /><span v-fit="41">Rename</span></div>
            </div>
            <div class="glabel"><span v-fit="47">Organize</span></div>
          </div>
          <div class="group g3">
            <div class="tools">
              <div class="big dark w44"><Ic n="newfolder" s="32" /><span v-fit="23">New</span><span v-fit="32">folder</span></div>
              <div class="smalls dark tight">
                <div><Ic n="newitem" s="16" /><i class="tri"></i></div>
                <div><Ic n="easy" s="16" /><i class="tri"></i></div>
              </div>
            </div>
            <div class="glabel"><span v-fit="23">New</span></div>
          </div>
          <div class="group g4">
            <div class="tools">
              <div class="big dark w58"><Ic n="props" s="32" /><span v-fit="52">Properties</span><i class="tri solo"></i></div>
              <div class="smalls">
                <div><Ic n="open" s="16" /><span v-fit="29">Open</span><i class="tri"></i></div>
                <div><Ic n="edit" s="16" /><span v-fit="20">Edit</span></div>
                <div><Ic n="history" s="16" /><span v-fit="37">History</span></div>
              </div>
            </div>
            <div class="glabel"><span v-fit="29">Open</span></div>
          </div>
          <div class="group g5">
            <div class="tools">
              <div class="smalls dark">
                <div><Ic n="selall" s="16" /><span v-fit="45">Select all</span></div>
                <div><Ic n="selnone" s="16" /><span v-fit="60">Select none</span></div>
                <div><Ic n="selinv" s="16" /><span v-fit="78">Invert selection</span></div>
              </div>
            </div>
            <div class="glabel"><span v-fit="30">Select</span></div>
          </div>
        </div>

        <div class="address">
          <Ic n="arrow" s="14" class="a1" /><Ic n="arrow" s="14" class="a2" /><Ic n="down" s="8" class="a3" /><Ic n="arrow" s="14" class="a4" />
          <div class="crumbs">
            <Ic n="folder" s="16" /><Ic n="left2" s="13" class="gl" />
            <span v-fit="75">Local Disk (C:)</span><Ic n="right" s="9" class="sep" />
            <span v-fit="72">Program Files</span><Ic n="right" s="9" class="sep" />
            <span v-fit="35">nodejs</span>
            <Ic n="down" s="11" class="dd" /><span class="refresh"><Ic n="refresh" s="12" /></span>
          </div>
          <div class="search"><Ic n="mag" s="14" /><span v-fit="73">Search nodejs</span></div>
        </div>

        <div class="body">
          <div class="tree">
            <div v-for="(t, i) in tree" :key="i" class="node" :class="['l' + t[2], t[4]]">
              <Ic :n="t[3]" s="16" /><span v-fit="t[1]">{{ t[0] }}</span>
            </div>
          </div>
          <div class="sb"><Ic n="up" s="10" class="su" /><div class="thumb"></div><Ic n="down" s="10" class="sd" /></div>
          <div class="list">
            <div class="cols">
              <span class="c1"><span v-fit="32">Name</span><Ic n="up" s="8" class="sort" /></span>
              <span class="c2"><span v-fit="75">Date modified</span></span>
              <span class="c3"><span v-fit="24">Type</span></span>
              <span class="c4"><span v-fit="21">Size</span></span>
            </div>
            <div v-for="(f, i) in files" :key="i" class="row">
              <Ic :n="f[0]" s="16" />
              <span class="n"><span v-fit="f[2]">{{ f[1] }}</span></span>
              <span class="d"><span v-fit="f[4]">{{ f[3] }}</span></span>
              <span class="t"><span v-fit="f[6]">{{ f[5] }}</span></span>
              <span class="s"><span v-fit="f[8]">{{ f[7] }}</span></span>
            </div>
          </div>
        </div>
        <footer class="status">
          <span v-fit="38">9 items</span><i></i>
          <span class="views">
            <svg class="v1" width="22" height="22"><rect x=".5" y=".5" width="21" height="21" fill="#cce8f7" stroke="#2a9bd6" /><path d="M4 6h3v2H4zM4 10h3v2H4zM4 14h3v2H4z" fill="#fff" stroke="#777" /><path d="M9 7h4M15 7h4M9 11h4M15 11h4M9 15h4M15 15h4" stroke="#777" /></svg>
            <svg width="14" height="11"><rect x=".5" y=".5" width="13" height="10" fill="#fff" stroke="#8b8f93" /><path d="M2 3h10v4H2z" fill="#6ba3d0" /><path d="M2 6h10v2H2z" fill="#3b6079" /></svg>
          </span>
        </footer>
      </section>

      <section class="browser">
        <div class="strip">
          <div v-for="(t, i) in tabs" :key="i" class="tab">
            <Ic :n="t[0]" s="16" /><span class="tt"><span v-fit="t[2]">{{ t[1] }}</span></span>
          </div>
          <div class="tab cur"><Ic n="mark" s="16" /><span class="up">Up</span><Ic n="x" s="10" class="cx" /></div>
          <svg class="plus" width="12" height="12"><path d="M6 0v12M0 6h12" stroke="#5f6368" stroke-width="1.800" /></svg>
          <svg class="guest" width="14" height="14"><circle cx="7" cy="7" r="7" fill="#5f6368" /><path d="M3.800 5h6.400L7 9.500z" fill="#fff" /></svg>
          <span class="wctl grey"><Ic n="min" s="12" /><Ic n="max" s="12" /><Ic n="thinx" s="12" /></span>
        </div>
        <div class="toolbar">
          <Ic n="arrow" s="15" class="t1" /><Ic n="arrow" s="15" class="t2" /><Ic n="reload" s="16" class="t3" />
          <div class="omni">
            <Ic n="lock" s="10" t="13" /><span v-fit="297" class="url"><b>github.com</b>/Sdrks1997/build-error/upload/main</span>
            <Ic n="zoomin" s="14" class="zi" /><Ic n="star" s="16" />
          </div>
          <Ic n="puzzle" s="16" class="pz" />
          <div class="paused"><i>A</i><span v-fit="38">Paused</span></div>
          <svg class="dots" width="4" height="14"><circle cx="2" cy="2" r="1.600" /><circle cx="2" cy="7" r="1.600" /><circle cx="2" cy="12" r="1.600" /></svg>
        </div>

        <div class="view">
          <div class="page">
            <div class="gh"><span class="burger"><i></i><i></i><i></i></span><Ic n="mark" s="35" class="cat" /><Ic n="o-bell" s="18" class="bell" /></div>
            <div class="repohead">
              <div class="repo"><Ic n="o-repo" s="17.600" /><a v-fit="90">Sdrks1997</a><em>/</em><a v-fit="98" class="sb6">build-error</a></div>
              <nav>
                <span v-for="n in nav" :key="n[1]" class="item" :class="n[3]" :style="{ width: n[4] + 'px' }"><Ic :n="n[0]" s="17.600" /><span v-fit="n[2]">{{ n[1] }}</span></span>
                <svg class="more" width="20" height="4"><circle cx="3" cy="2" r="1.800" /><circle cx="10.500" cy="2" r="1.800" /><circle cx="18" cy="2" r="1.800" /></svg>
              </nav>
            </div>
            <div class="crumb"><a v-fit="87" class="sb6">build-error</a><em>/</em></div>
            <div class="drop">
              <Ic n="o-file24" s="27" t="34" />
              <h2><span v-fit="552">Drag additional files here to add them to your</span></h2>
              <h2><span v-fit="123">repository</span></h2>
              <p><span v-fit="22">Or</span><a v-fit="148">choose your files</a></p>
            </div>
            <div class="ups">
              <div v-for="u in uploads" :key="u[0]"><Ic n="o-file" s="17.600" /><span v-fit="u[1]">{{ u[0] }}</span><Ic n="x" s="12" class="rm" /></div>
            </div>
            <div class="commit">
              <svg class="ava" width="52" height="52" viewBox="0 0 52 52"><clipPath id="cl"><circle cx="26" cy="26" r="26" /></clipPath><g clip-path="url(#cl)"><path d="M0 0h52v52H0z" fill="#f0f0f0" /><path d="M4 4h44v27h-9v18h-9V31h-8v18h-9V31H4z" fill="#9be0a5" /><path d="M13 13h26v9H13z" fill="#f0f0f0" /></g></svg>
              <div class="cbox">
                <svg class="notch" width="9" height="17"><path d="M9 .5L1 8.500l8 8" fill="#fff" stroke="#e1e4e8" /></svg>
                <h3><span v-fit="167">Commit changes</span></h3>
                <div class="inp"><span v-fit="134">Add files via upload</span></div>
                <div class="inp area"><span v-fit="268">Add an optional extended description...</span></div>
              </div>
            </div>
          </div>
          <div class="vsb"><i class="tu"></i><div class="vth"></div><i class="td"></i></div>
        </div>

        <div class="shelf">
          <Ic n="zip" s="16" /><div class="dl"><span v-fit="35">git.zip</span><span v-fit="40" class="can">Canceled</span></div>
          <Ic n="up" s="12" class="du" /><i class="dv"></i>
          <div class="all"><span v-fit="46">Show all</span></div><Ic n="x" s="12" class="dx" />
        </div>
        <div class="shade"></div>
      </section>
    </div>

    <div class="taskbar">
      <div class="start"><Ic n="win" s="16" /></div>
      <div class="tsearch"><Ic n="mag" s="17" /><span v-fit="128">Type here to search</span></div>
      <div class="app w48"><i class="ring"></i></div>
      <div class="app w48"><Ic n="taskview" s="18" t="16" /></div>
      <div class="app w52"><Ic n="edge" s="24" /></div>
      <div v-for="a in apps" :key="a[0]" class="app" :class="a[1]">
        <Ic :n="a[0]" s="23" />
        <b v-if="a[0] === 'whatsapp'" class="badge">6</b>
        <b v-if="a[0] === 'chrome'" class="badge orange">A</b>
      </div>
      <div class="tray">
        <Ic n="weather" s="21" t="17" /><span v-fit="28" class="temp">25°C</span><Ic n="up" s="13" class="tup" /><Ic n="net" s="16" /><Ic n="sound" s="17" t="16" class="snd" />
        <div class="clock"><span v-fit="49">11:14 AM</span><span v-fit="52">6/24/2021</span></div>
        <div class="notif"><Ic n="note" s="16" /><b>3</b></div>
        <i class="peek"></i>
      </div>
    </div>
  </div>
</template>

<style>
body { overflow: hidden; }
</style>

<style scoped>
* { box-sizing: border-box; }
.screen { width: 1600px; height: 1200px; overflow: hidden; display: flex; flex-direction: column; font: 11.800px/16px "Open Sans", "Noto Sans", sans-serif; color: #000; font-variant-ligatures: none; }
.screen span, .screen a { white-space: nowrap; flex-shrink: 0; }
.sprite { position: absolute; }
.ic, svg { flex: none; display: block; }
i, em { font-style: normal; display: block; flex: none; }
.windows { display: flex; height: 1160px; }

.explorer { width: 800px; background: #fff; display: flex; flex-direction: column; border-left: 1px solid #f3f3f3; }
.titlebar { height: 31px; display: flex; align-items: center; padding: 0 0 1px 8px; }
.bar { width: 1px; height: 12px; background: #8d8d8d; margin-left: 7px; }
.q1 { margin-left: 11px; }
.q2 { margin-left: 7px; }
.qat { width: 7px; height: 6px; margin-left: 7px; border-top: 1px solid #000; position: relative; }
.qat::after { content: ""; position: absolute; left: 0; top: 2px; border: 3.500px solid transparent; border-top-color: #000; }
.b2 { margin-left: 8px; }
.wt { margin-left: 7px; }
.wctl { margin-left: auto; display: flex; gap: 34px; margin-right: 18px; }
.tabs { height: 24px; display: flex; align-items: stretch; border-bottom: 1px solid #dadbdc; color: #2b2b2b; }
.tabs > span { display: flex; align-items: center; justify-content: center; padding-bottom: 1px; }
.file { width: 56px; background: #1e5c99; color: #fff; height: 23px; }
.home { width: 58px; background: #f5f6f7; border: 1px solid #dadbdc; border-bottom: 0; height: 24px; }
.tabs > .home { padding: 0 2px 3px 0; }
.plain { width: 58px; }
.vw { width: 54px; }
.coll { margin: 5px 11px 0 auto; color: #9a9a9a; }
.tabs .help { width: 16px; height: 16px; border-radius: 50%; background: #0b63bd; color: #fff; font-weight: 700; margin: 3px 4px 0 0; padding: 0; }
.ribbon { height: 92px; background: #f5f6f7; border-bottom: 1px solid #d6d7d9; display: flex; color: #75787b; }
.group { display: flex; flex-direction: column; border-right: 1px solid #e0e1e3; height: 87px; margin-top: 2px; }
.g1 { width: 263px; }
.g2 { width: 191px; padding-left: 4px; }
.g3 { width: 83px; padding-left: 2px; }
.g4 { width: 133px; padding-left: 2px; }
.g5 { width: 115px; }
.tools { display: flex; height: 71px; padding-top: 5px; }
.glabel { display: flex; justify-content: center; line-height: 14px; margin-top: 1px; color: #4a4f55; }
.g2 .glabel { margin-right: 6px; }
.g3 .glabel { padding-right: 1px; }
.g4 .glabel { padding-right: 5px; }
.g5 .glabel { padding-right: 2px; }
.big { display: flex; flex-direction: column; align-items: center; line-height: 13px; }
.big .ic { margin-bottom: 3px; }
.dark { color: #1f1f1f; }
.w78 { width: 78px; }
.w32 { width: 32px; margin-right: 1px; margin-left: -1px; }
.w50 { width: 50px; padding-left: 1px; }
.w40 { width: 40px; }
.w42 { width: 42px; padding-left: 1px; }
.w44 { width: 44px; padding-left: 1px; }
.w58 { width: 58px; }
.arr { display: flex; align-items: center; gap: 4px; }
.tri { border: 3px solid transparent; border-top-color: currentColor; border-bottom: 0; }
.solo { margin-top: 4px; }
.inner { width: 1px; height: 55px; background: #dcdddf; margin: 2px 1px 0 6px; }
.smalls { display: flex; flex-direction: column; gap: 6px; padding-top: 0; }
.smalls > div { display: flex; align-items: center; height: 16px; gap: 3px; }
.smalls span { position: relative; top: -.5px; }
.g4 .smalls { margin-left: 4px; }
.g4 .smalls > div { gap: 2px; }
.g4 .smalls .tri { margin-left: 4px; opacity: .6; }
.g5 .smalls { margin-left: 7px; }
.tight { margin-left: 3px; }

.address { height: 42px; display: flex; align-items: flex-start; padding-top: 5px; color: #6b6b6b; }
.address > .ic { margin-top: 8px; }
.a1 { margin-left: 12px; }
.a2 { margin-left: 16px; transform: scaleX(-1); }
.a3.ic { margin: 11px 0 0 12px; }
.a4 { margin-left: 10px; transform: rotate(90deg); }
.crumbs { margin-left: 6px; width: 430px; height: 30px; border: 1px solid #d9d9d9; display: flex; align-items: center; padding: 0 0 1px 2px; color: #111; }
.gl { margin: 0 5px 0 3px; color: #555; }
.sep { margin: 0 7px 0 7px; color: #555; }
.dd { margin-left: auto; margin-right: 9px; color: #555; }
.refresh { width: 30px; height: 28px; border-left: 1px solid #d9d9d9; display: flex; align-items: center; justify-content: center; color: #555; margin-bottom: -1px; }
.search { margin-left: 12px; width: 238px; height: 30px; border: 1px solid #d9d9d9; display: flex; align-items: center; gap: 13px; padding: 0 0 1px 13px; color: #6d6d6d; }

.body { display: flex; height: 947px; }
.tree { width: 139px; margin: -1px 1px 0 0; overflow: hidden; }
.node { display: flex; align-items: center; gap: 5px; height: 24px; }
.l0 { padding-left: 24px; }
.l1 { padding-left: 32px; }
.l2 { padding-left: 40px; }
.gap { margin-top: 8px; }
.faint .ic { opacity: .5; }
.selected { background: #d9d9d9; }
.sb { width: 16px; background: #f0f0f0; display: flex; flex-direction: column; align-items: center; justify-content: space-between; color: #505050; }
.su { margin-top: 4px; }
.sd { margin-bottom: 3px; }
.thumb { width: 15px; height: 737px; background: #cdcdcd; margin: 122px 1px auto 0; }
.list { margin-left: 2px; border-left: 1px solid #f1f1f1; flex: 1; }
.cols { display: flex; height: 25px; color: #4c607a; line-height: 25px; }
.cols > span { border-right: 1px solid #e2e2e2; padding-left: 6px; }
.c1 { width: 273px; position: relative; }
.cols .c1 { padding-left: 18px; }
.sort { position: absolute; left: 139px; top: -2px; color: #777; }
.c2 { width: 144px; }
.c3 { width: 120px; }
.c4 { width: 80px; }
.row { display: flex; align-items: center; height: 21px; padding-left: 19px; color: #6d6d6d; }
.cols + .row { margin-top: 5px; }
.n { width: 240px; padding-left: 4px; color: #000; }
.d { width: 144px; padding-left: 4px; }
.t { width: 120px; padding-left: 4px; }
.s { width: 70px; display: flex; justify-content: flex-end; }
.status { height: 23px; display: flex; align-items: center; padding: 0 0 1px 14px; color: #1e395b; }
.status > i { width: 1px; height: 11px; background: #e8e8e8; margin-left: 10px; }
.views { margin-left: auto; display: flex; gap: 4px; align-items: center; margin-right: 9px; }

.browser { width: 800px; position: relative; display: flex; flex-direction: column; background: #fff; border-left: 1px solid #575152; border-right: 1px solid #565a50; border-top: 1px solid #9b9da0; border-bottom: 1px solid #6a5458; }
.strip { height: 42px; background: #e7eaed; display: flex; align-items: flex-end; }
.tab { width: 76px; height: 34px; display: flex; align-items: center; padding-left: 8px; color: #6a6e73; position: relative; padding-bottom: 1px; }
.tab:first-child { width: 84px; padding-left: 16px; }
.tab::after { content: ""; position: absolute; right: -1px; top: 7px; width: 1px; height: 20px; background: #8c9096; }
.tab:nth-child(6)::after { display: none; }
.tt { display: block; width: 37px; margin-left: 8px; overflow: hidden; -webkit-mask-image: linear-gradient(90deg, #000 60%, transparent); mask-image: linear-gradient(90deg, #000 60%, transparent); font-size: 12.500px; }
.cur { background: #fff; border-radius: 8px 8px 0 0; margin-left: -1px; color: #24292e; }
.cur::after { display: none; }
.up { margin-left: 8px; width: 15px; color: #777; }
.cx { margin-left: 8px; color: #5f6368; }
.plus { margin: 0 0 11px 16px; }
.guest { margin: 0 0 10px 65px; }
.strip .wctl { align-self: flex-start; margin: 8px 17px 0 auto; color: #909498; }
.toolbar { height: 37px; display: flex; align-items: center; border-bottom: 1px solid #dcdee0; color: #5f6368; }
.t1 { margin-left: 14px; }
.t2 { margin-left: 17px; color: #babcbe; transform: scaleX(-1); }
.t3 { margin-left: 17px; }
.omni { margin-left: 14px; width: 529px; height: 28px; border-radius: 14px; background: #f1f3f4; display: flex; align-items: center; padding-left: 13px; }
.url { margin-left: 11px; font-size: 14px; color: #6b6f73; }
.url b { font-weight: 400; color: #202124; }
.zi { margin: 0 17px 0 auto; }
.omni .ic:last-child { margin-right: 10px; }
.pz { margin-left: 14px; }
.paused { margin-left: 10px; width: 81px; height: 28px; border: 1px solid #4460cc; border-radius: 14px; background: #e8ecfa; display: flex; align-items: center; padding: 0 0 1px 2px; color: #4059cf; }
.paused i { width: 22px; height: 22px; border-radius: 50%; background: #f04e23; color: #fff; text-align: center; line-height: 22px; margin: 1px 8px 0 0; }
.dots { margin-left: 17px; fill: #5f6368; }

.view { height: 1022px; display: flex; overflow: hidden; font-size: 15.400px; }
.page { width: 781px; height: 1022px; overflow: hidden; color: #24292e; }
.gh { height: 70px; background: #24292e; color: #fff; display: flex; align-items: center; }
.burger { width: 23px; height: 20px; margin: -2px 0 0 19px; display: flex; flex-direction: column; justify-content: space-between; }
.burger i { height: 2.600px; border-radius: 1px; background: #fff; }
.cat { margin-left: 335px; }
.bell { margin: 4px 0 0 333px; }
.repohead { height: 117px; background: #fafbfc; border-bottom: 1px solid #e4e7ea; display: flex; flex-direction: column; justify-content: space-between; }
.repo { display: flex; align-items: center; font-size: 19.500px; line-height: 28px; padding: 19px 0 0 18px; }
.repo .ic { color: #6a737d; margin-right: 8px; }
a { color: #4056cf; display: block; }
em { color: #586069; padding: 0 5px 0 4px; }
.sb6 { font-weight: 600; }
nav { display: flex; height: 54px; padding-left: 18px; margin-bottom: -1px; line-height: 22px; }
.item { display: flex; align-items: center; gap: 7px; padding: 3px 0 0 17px; color: #24292e; }
.item .ic { color: #959da5; margin-top: -1px; }
.item.on { border-bottom: 2px solid #f9826c; font-weight: 600; padding-top: 5px; }
.item.on .ic { color: #24292e; }
.item:nth-child(2) { padding-left: 18px; }
.item:nth-child(3) { padding-left: 16px; gap: 8px; }
.item:nth-child(4) { padding-left: 17px; }
.item:nth-child(5) { padding-left: 18px; }
.item:nth-child(6) { padding-left: 17px; }
.more { margin: 27px 0 0 42px; fill: #24292e; }
.crumb { display: flex; padding: 40px 0 0 18px; line-height: 22px; }
.drop { margin: 19px 0 0 18px; width: 745px; height: 347px; border: 1px solid #e1e4e8; border-radius: 6px; display: flex; flex-direction: column; align-items: center; padding-top: 89px; }
.drop .ic { color: #959da5; margin-bottom: 11px; }
h2 { margin: 0; font-size: 25px; line-height: 39px; font-weight: 600; }
h2 span { display: inline-block; }
.drop p { margin: 0; font-size: 19.500px; line-height: 39px; display: flex; gap: 5px; color: #586069; }
.ups { margin: 18px 0 0 18px; width: 745px; height: 176px; border: 1px solid #e1e4e8; border-radius: 6px; display: flex; flex-direction: column; }
.ups > div { flex: 1; display: flex; align-items: center; padding: 4px 20px 0 17px; border-top: 1px solid #eaecef; }
.ups > div:first-child { border-top: 0; }
.ups .ic:first-child { margin-right: 9px; }
.ups .rm { margin: -1px 0 0 auto; }
.commit { display: flex; margin: 22px 0 0 18px; }
.cbox { position: relative; margin-left: 18px; width: 675px; height: 300px; border: 1px solid #e1e4e8; border-radius: 6px; padding: 17px 18px; }
.notch { position: absolute; left: -9px; top: 13px; }
h3 { margin: 0 0 11px; font-size: 22px; line-height: 34px; font-weight: 600; }
.inp { height: 35px; border: 1px solid #e1e4e8; border-radius: 6px; background: #fafbfc; padding: 7px 13px; line-height: 21px; color: #6f7780; }
.area { margin-top: 11px; height: 160px; padding-top: 12px; }
.vsb { width: 17px; background: #f1f1f1; display: flex; flex-direction: column; align-items: center; }
.tu { margin-top: 7px; border: 4px solid transparent; border-top: 0; border-bottom-color: #a3a3a3; }
.vth { width: 13px; height: 718px; background: #c1c1c1; margin-top: 6px; }
.td { margin: auto 0 7px; border: 4px solid transparent; border-bottom: 0; border-top-color: #505050; }
.shelf { height: 57px; border-top: 1px solid #d5d7d9; display: flex; align-items: center; padding-left: 21px; color: #444; }
.shelf > .ic:first-child { margin-bottom: 2px; }
.dl { width: 160px; margin-left: 12px; padding-top: 2px; display: flex; flex-direction: column; align-items: flex-start; font-size: 13px; line-height: 20px; }
.can { font-size: 10px; color: #222; }
.du { margin-left: -2px; color: #777; }
.dv { width: 1px; height: 44px; background: #d0d2d4; margin-left: 17px; }
.all { margin: -1px 0 0 447px; width: 78px; height: 32px; border: 1px solid #d5d7dc; border-radius: 4px; display: flex; align-items: center; justify-content: center; color: #4059cf; font-weight: 600; }
.dx { margin-left: 12px; color: #666; }
.shade { position: absolute; left: 0; top: 0; bottom: 0; width: 20px; background: linear-gradient(90deg, rgba(60, 40, 45, .24), rgba(60, 40, 45, .06) 60%, transparent); pointer-events: none; }

.taskbar { height: 40px; display: flex; background: linear-gradient(90deg, #2a2c26 0, #2a2d26 450px, #353a3e 560px, #34373a 760px, #33362e 850px, #33322e 960px, #401d25 1080px, #391e25 1180px, #33302d 1280px, #3e3f38 1370px, #3a3b34 1480px, #33332e 1600px); color: #fff; }
.start { width: 48px; display: flex; align-items: center; justify-content: center; }
.tsearch { width: 344px; background: #f1f1f1; border: 1px solid #bdbdbd; color: #3a3a3a; display: flex; align-items: center; padding-left: 11px; gap: 11px; font-size: 15px; }
.tsearch .ic { color: #222; }
.app { width: 49px; display: flex; align-items: center; justify-content: center; position: relative; }
.app.w48 { width: 48px; }
.app.w52 { width: 52px; }
.app.active { background: #5b6063; width: 48px; border-bottom: 2px solid #76b9ed; box-shadow: inset -4px 0 #484d50; }
.app.active .ic { margin-right: 2px; }
.app.open::after { content: ""; position: absolute; left: 4px; right: 5px; bottom: 0; height: 2px; background: #76b9ed; }
.ring { width: 16px; height: 16px; border: 2px solid #fff; border-radius: 50%; }
.badge { position: absolute; left: 22px; top: 18px; width: 17px; height: 17px; border-radius: 50%; background: #f0100c; color: #fff; font: 14px/17px "Liberation Sans", sans-serif; text-align: center; }
.orange { background: #f04e23; font: 600 9px/16px "Open Sans", sans-serif; width: 16px; height: 16px; top: 19px; left: 24px; }
.tray { margin-left: auto; width: 261px; display: flex; align-items: center; }
.temp { font-size: 14px; margin-left: 10px; color: #d5d5d2; }
.tup { margin: 0 9px 0 19px; }
.snd { margin-left: 7px; }
.clock { width: 54px; margin: -2px 0 0 9px; display: flex; flex-direction: column; align-items: center; line-height: 18px; }
.notif { width: 26px; height: 26px; margin-left: 17px; padding-top: 4px; position: relative; }
.notif b { position: absolute; left: 8px; top: 9px; width: 16px; height: 16px; border-radius: 50%; border: 1px solid #b5b5b0; background: #3b3c37; font: 600 11px/14px "Open Sans", sans-serif; text-align: center; }
.peek { width: 1px; height: 40px; background: #85867f; margin-left: 11px; }
</style>
